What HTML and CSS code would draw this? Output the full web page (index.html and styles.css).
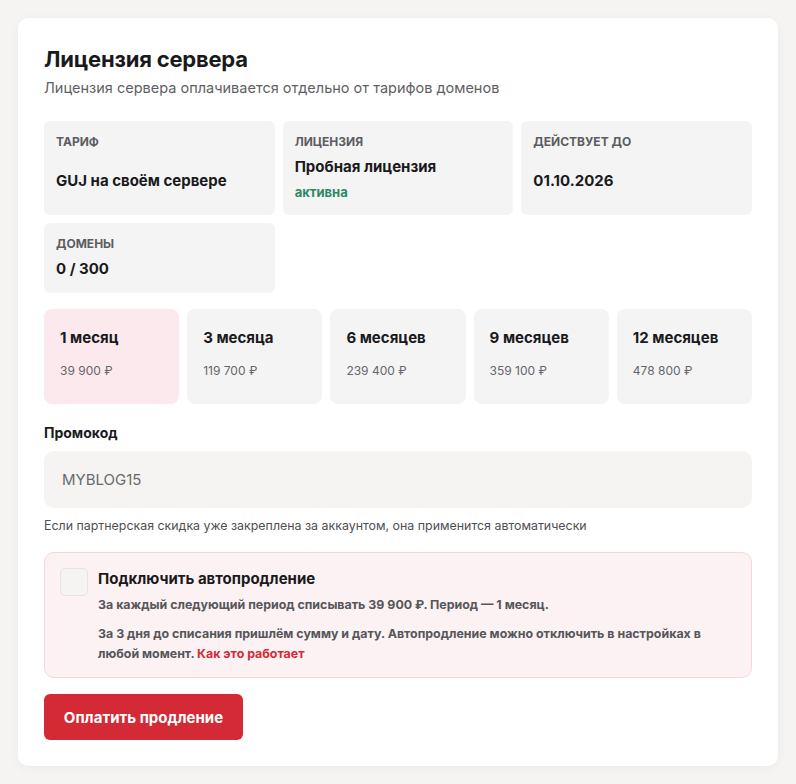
FILE: index.html
```html
<!DOCTYPE html>
<html lang="ru">
<head>
<meta charset="utf-8">
<title>Лицензия сервера</title>
<link rel="stylesheet" href="styles.css">
</head>
<body>
<main class="card">
  <h1 class="title">Лицензия сервера</h1>
  <p class="subtitle">Лицензия сервера оплачивается отдельно от тарифов доменов</p>

  <section class="info-grid">
    <div class="info">
      <div class="info-label">Тариф</div>
      <div class="info-center"><div class="info-value">GUJ на своём сервере</div></div>
    </div>
    <div class="info">
      <div class="info-label">Лицензия</div>
      <div class="info-value">Пробная лицензия</div>
      <div class="info-status">активна</div>
    </div>
    <div class="info">
      <div class="info-label">Действует до</div>
      <div class="info-center"><div class="info-value">01.10.2026</div></div>
    </div>
    <div class="info">
      <div class="info-label">Домены</div>
      <div class="info-value">0 / 300</div>
    </div>
  </section>

  <section class="periods">
    <div class="period period-active"><div class="period-name">1 месяц</div><div class="period-price">39 900 ₽</div></div>
    <div class="period"><div class="period-name">3 месяца</div><div class="period-price">119 700 ₽</div></div>
    <div class="period"><div class="period-name">6 месяцев</div><div class="period-price">239 400 ₽</div></div>
    <div class="period"><div class="period-name">9 месяцев</div><div class="period-price">359 100 ₽</div></div>
    <div class="period"><div class="period-name">12 месяцев</div><div class="period-price">478 800 ₽</div></div>
  </section>

  <label class="promo-label" for="promo">Промокод</label>
  <input class="promo-input" id="promo" type="text" value="MYBLOG15">
  <p class="promo-hint">Если партнерская скидка уже закреплена за аккаунтом, она применится автоматически</p>

  <section class="autorenew">
    <span class="checkbox"></span>
    <div class="autorenew-body">
      <div class="autorenew-title">Подключить автопродление</div>
      <p class="autorenew-text">За каждый следующий период списывать 39 900 ₽. Период — 1 месяц.</p>
      <p class="autorenew-text autorenew-text-2">За 3 дня до списания пришлём сумму и дату. Автопродление можно отключить в настройках в любой момент. <a class="link" href="#">Как это работает</a></p>
    </div>
  </section>

  <button class="pay-btn" type="button">Оплатить продление</button>
</main>
</body>
</html>
```

FILE: styles.css
```css
* { box-sizing: border-box; }

body {
  margin: 0;
  padding: 18px;
  background: #f6f4f2;
  font-family: Inter, "Noto Sans", "DejaVu Sans", sans-serif;
  color: #1d1d1f;
}

.card {
  background: #ffffff;
  border-radius: 10px;
  padding: 27px 26px 26px 26px;
  box-shadow: 0 2px 12px rgba(0, 0, 0, 0.04);
}

.title {
  margin: 0;
  font-size: 22px;
  font-weight: 700;
  line-height: 28px;
  letter-spacing: -0.2px;
  color: #1a1a1c;
}

.subtitle {
  margin: 5px 0 0 0;
  font-size: 14.5px;
  line-height: 20px;
  color: #5f5f63;
}

.info-grid {
  margin-top: 23px;
  display: grid;
  grid-template-columns: repeat(3, 1fr);
  gap: 8px 8px;
}

.info {
  background: #f4f4f5;
  border-radius: 6px;
  padding: 13px 12px 14px 12px;
  display: flex;
  flex-direction: column;
}

.info-label {
  font-size: 12px;
  font-weight: 700;
  line-height: 16px;
  text-transform: uppercase;
  color: #5c5c61;
}

.info-center {
  flex: 1;
  display: flex;
  align-items: center;
  padding-top: 10px;
}

.info-value {
  margin-top: 7px;
  font-size: 15px;
  font-weight: 700;
  line-height: 20px;
  color: #1a1a1c;
}

.info-center .info-value { margin-top: 0; }

.info-status {
  margin-top: 6px;
  font-size: 13px;
  font-weight: 700;
  line-height: 18px;
  color: #2b8a63;
}

.periods {
  margin-top: 16px;
  display: grid;
  grid-template-columns: repeat(5, 1fr);
  gap: 8px;
}

.period {
  background: #f4f4f5;
  border-radius: 8px;
  padding: 19px 16px 24px 16px;
  height: 95px;
}

.period-active { background: #fce9ed; }

.period-name {
  font-size: 15px;
  font-weight: 700;
  line-height: 20px;
  color: #1a1a1c;
}

.period-price {
  margin-top: 15px;
  font-size: 12px;
  line-height: 16px;
  color: #66666b;
}

.promo-label {
  display: block;
  margin-top: 20px;
  font-size: 14px;
  font-weight: 700;
  line-height: 18px;
  color: #1a1a1c;
}

.promo-input {
  display: block;
  width: 100%;
  margin-top: 9px;
  height: 57px;
  border: none;
  border-radius: 10px;
  background: #f5f4f2;
  padding: 0 18px;
  font-family: inherit;
  font-size: 15px;
  color: #6a6a6e;
  outline: none;
}

.promo-hint {
  margin: 10px 0 0 0;
  font-size: 12.4px;
  line-height: 16px;
  color: #4f4f53;
}

.autorenew {
  margin-top: 18px;
  display: flex;
  gap: 10px;
  background: #fcf2f3;
  border: 1px solid #f3d7da;
  border-radius: 10px;
  padding: 15px 16px 13px 15px;
}

.checkbox {
  flex: none;
  width: 28px;
  height: 28px;
  border-radius: 5px;
  background: #f5f4f3;
  border: 1px solid #e7e3e2;
}

.autorenew-title {
  margin-top: 1px;
  font-size: 15px;
  font-weight: 700;
  line-height: 20px;
  color: #1a1a1c;
}

.autorenew-text {
  margin: 6px 0 0 0;
  font-size: 12.4px;
  font-weight: 700;
  line-height: 20px;
  color: #56565b;
}

.autorenew-text-2 { margin-top: 9px; }

.link {
  color: #d52a36;
  text-decoration: none;
}

.pay-btn {
  display: block;
  margin-top: 16px;
  width: 199px;
  height: 46px;
  border: none;
  border-radius: 6px;
  background: #d42a35;
  color: #ffffff;
  font-family: inherit;
  font-size: 15px;
  font-weight: 700;
}
```
